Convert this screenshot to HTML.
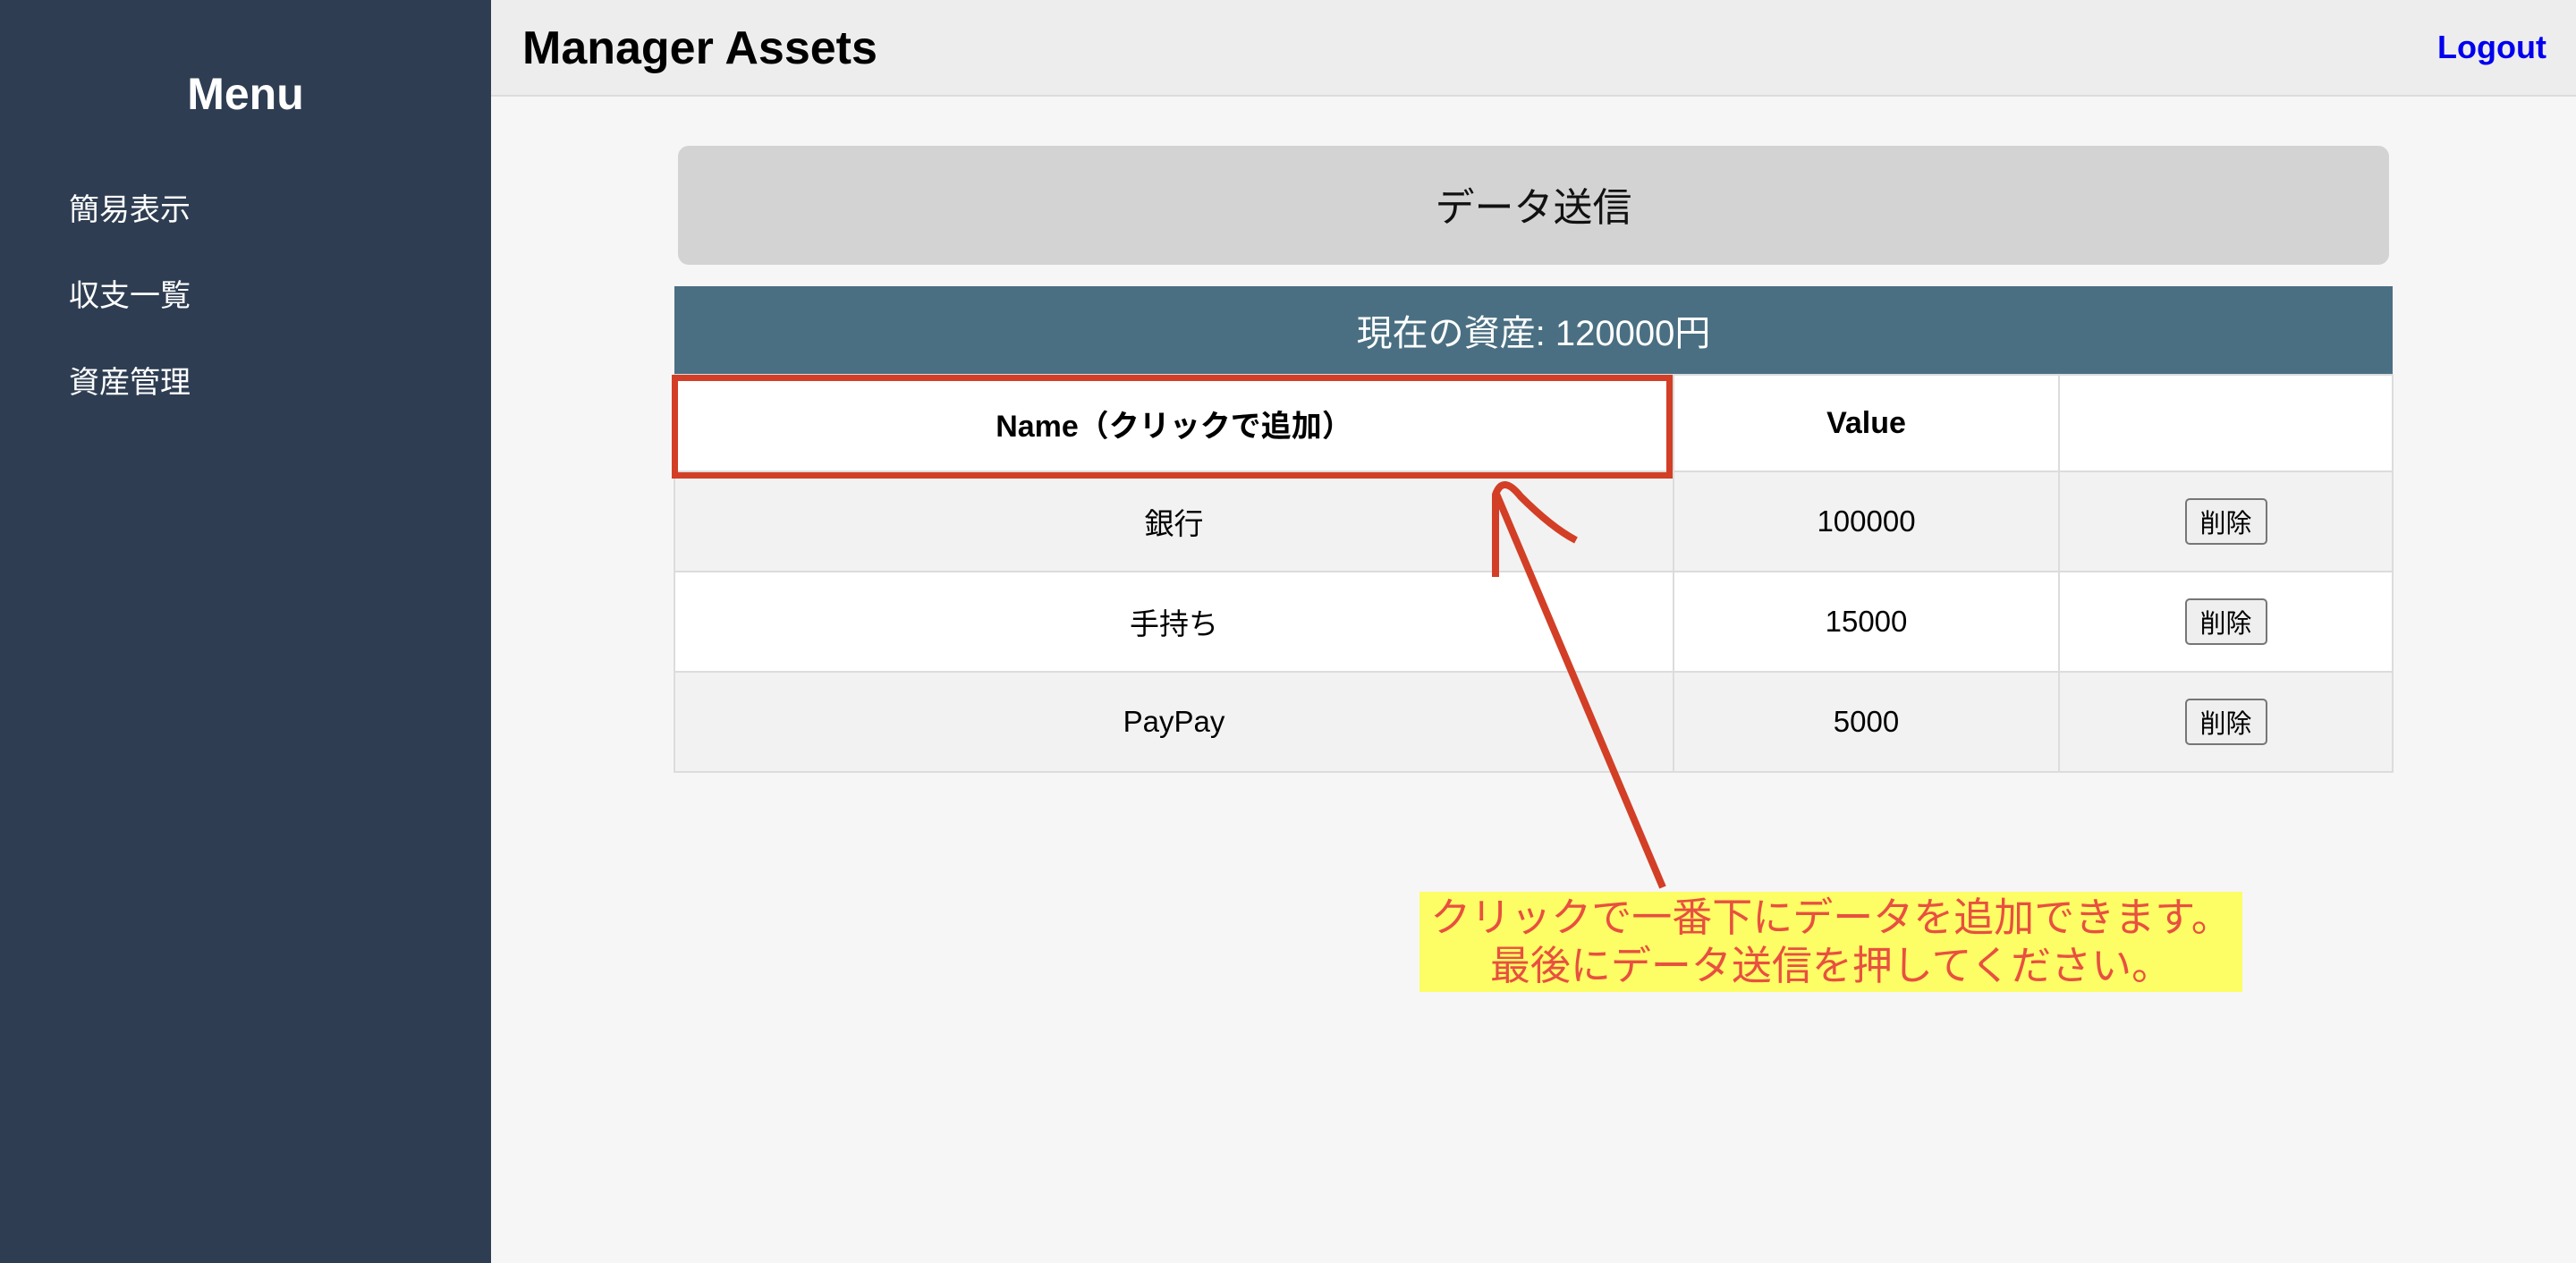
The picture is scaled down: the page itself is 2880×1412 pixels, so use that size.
<!DOCTYPE html>
<html><head><meta charset="utf-8"><style>
*{margin:0;padding:0;box-sizing:border-box}
body{width:2880px;height:1412px;overflow:hidden;background:#f6f6f6;font-family:"Liberation Sans","Noto Sans CJK JP",sans-serif;position:relative}
.side{position:absolute;left:0;top:0;width:549px;height:1412px;background:#2e3d52;color:#fff}
.side h2{position:absolute;top:76px;width:100%;text-align:center;font-size:50px;font-weight:bold}
.side div{position:absolute;left:77px;font-size:34px}
.hdr{position:absolute;left:549px;top:0;right:0;height:108px;background:#ededed;border-bottom:2px solid #dcdcdc}
.hdr h1{position:absolute;left:35px;top:24px;font-size:52px;font-weight:bold;color:#000}
.hdr a{position:absolute;right:33px;top:32px;font-size:36px;font-weight:bold;color:#0000ee;text-decoration:none}
.send{position:absolute;left:758px;top:163px;width:1913px;height:133px;background:#d3d3d3;border-radius:12px;text-align:center;line-height:140px;font-size:44px;color:#111}
table{position:absolute;left:753px;top:320px;width:1923px;border-collapse:collapse;font-size:33px}
td,th{border:2px solid #dcdcdc;text-align:center;height:112px}
.cap{background:#4a6f82;color:#fff;font-size:40px;height:99px;border:none}
th{height:108px;background:#fff;font-weight:bold;font-size:34px}
tr.g td{background:#f2f2f2}
tr.w td{background:#fff}
button{font-family:inherit;font-size:29px;background:#efefef;border:2px solid #767676;border-radius:5px;width:92px;height:52px}
.red{position:absolute;left:751px;top:419px;width:1119px;height:116px;border:7px solid #d23f26}
.note{position:absolute;left:1587px;top:997px;width:920px;height:112px;background:#fdfd66;color:#e8503f;font-size:45px;text-align:center;line-height:54px;padding-top:2px}
</style></head><body>
<div class="side"><h2>Menu</h2><div style="top:207px">簡易表示</div><div style="top:303px">収支一覧</div><div style="top:400px">資産管理</div></div>
<div class="hdr"><h1>Manager Assets</h1><a>Logout</a></div>
<div class="send">データ送信</div>
<table>
<tr><td colspan="3" class="cap">現在の資産: 120000円</td></tr>
<tr><th style="width:1117px">Name（クリックで追加）</th><th style="width:431px">Value</th><th></th></tr>
<tr class="g"><td>銀行</td><td>100000</td><td><button>削除</button></td></tr>
<tr class="w"><td>手持ち</td><td>15000</td><td><button>削除</button></td></tr>
<tr class="g"><td>PayPay</td><td>5000</td><td><button>削除</button></td></tr>
</table>
<div class="red"></div>
<svg style="position:absolute;left:0;top:0" width="2880" height="1412"><g fill="none" stroke="#d23f26" stroke-width="8"><path d="M1859 992 L1673 552"/><path d="M1672 645 L1672 553 Q1680 530 1700 555 Q1735 590 1762 604"/></g></svg>
<div class="note">クリックで一番下にデータを追加できます。<br>最後にデータ送信を押してください。</div>
</body></html>
